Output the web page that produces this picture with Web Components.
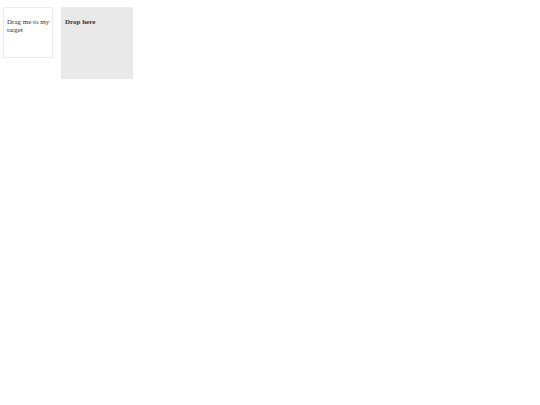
<!DOCTYPE html>
<html lang="en">
<head>
<meta charset="utf-8">
<meta name="viewport" content="width=device-width, initial-scale=1">
<title>Droppable</title>
<style>
  body {
    margin: 0;
    background: #fff;
    color: #333;
    font-family: "Liberation Serif", "Times New Roman", serif;
    font-size: 7px;
    line-height: 8px;
  }
</style>
</head>
<body>
<drop-demo>
  <drag-card>Drag me to my target</drag-card>
  <drop-zone>Drop here</drop-zone>
</drop-demo>

<script>
class DropDemo extends HTMLElement {
  constructor() {
    super();
    this.attachShadow({ mode: 'open' });
    this.shadowRoot.innerHTML = `
      <style>
      :host {
        display: flex;
        align-items: flex-start;
        gap: 8px;
        padding: 7px 3px;
      }
      </style>
      <slot></slot>
    `;
  }
}

class DragCard extends HTMLElement {
  constructor() {
    super();
    this.attachShadow({ mode: 'open' });
    this.shadowRoot.innerHTML = `
      <style>
      :host {
        display: block;
        box-sizing: border-box;
        width: 50px;
        height: 51px;
        padding: 10px 0 10px 3px;
        border: 1px solid #ebebeb;
        background: #fff;
        cursor: move;
      }
      p {
        margin: 0;
      }
      </style>
      <p><slot></slot></p>
    `;
  }

  connectedCallback() {
    this.draggable = true;
    this.addEventListener('dragstart', (e) => {
      e.dataTransfer.setData('text/plain', this.textContent);
    });
  }
}

class DropZone extends HTMLElement {
  constructor() {
    super();
    this.attachShadow({ mode: 'open' });
    this.shadowRoot.innerHTML = `
      <style>
      :host {
        display: block;
        box-sizing: border-box;
        width: 72px;
        height: 72px;
        padding: 10px 3px;
        border: 1px solid #ebebeb;
        background: #e9e9e9;
        font-weight: bold;
      }
      p {
        margin: 0;
      }
      </style>
      <p><slot></slot></p>
    `;
  }

  connectedCallback() {
    this.addEventListener('dragover', (e) => e.preventDefault());
    this.addEventListener('drop', (e) => {
      e.preventDefault();
      this.textContent = 'Dropped!';
    });
  }
}

customElements.define('drop-demo', DropDemo);
customElements.define('drag-card', DragCard);
customElements.define('drop-zone', DropZone);
</script>
</body>
</html>
